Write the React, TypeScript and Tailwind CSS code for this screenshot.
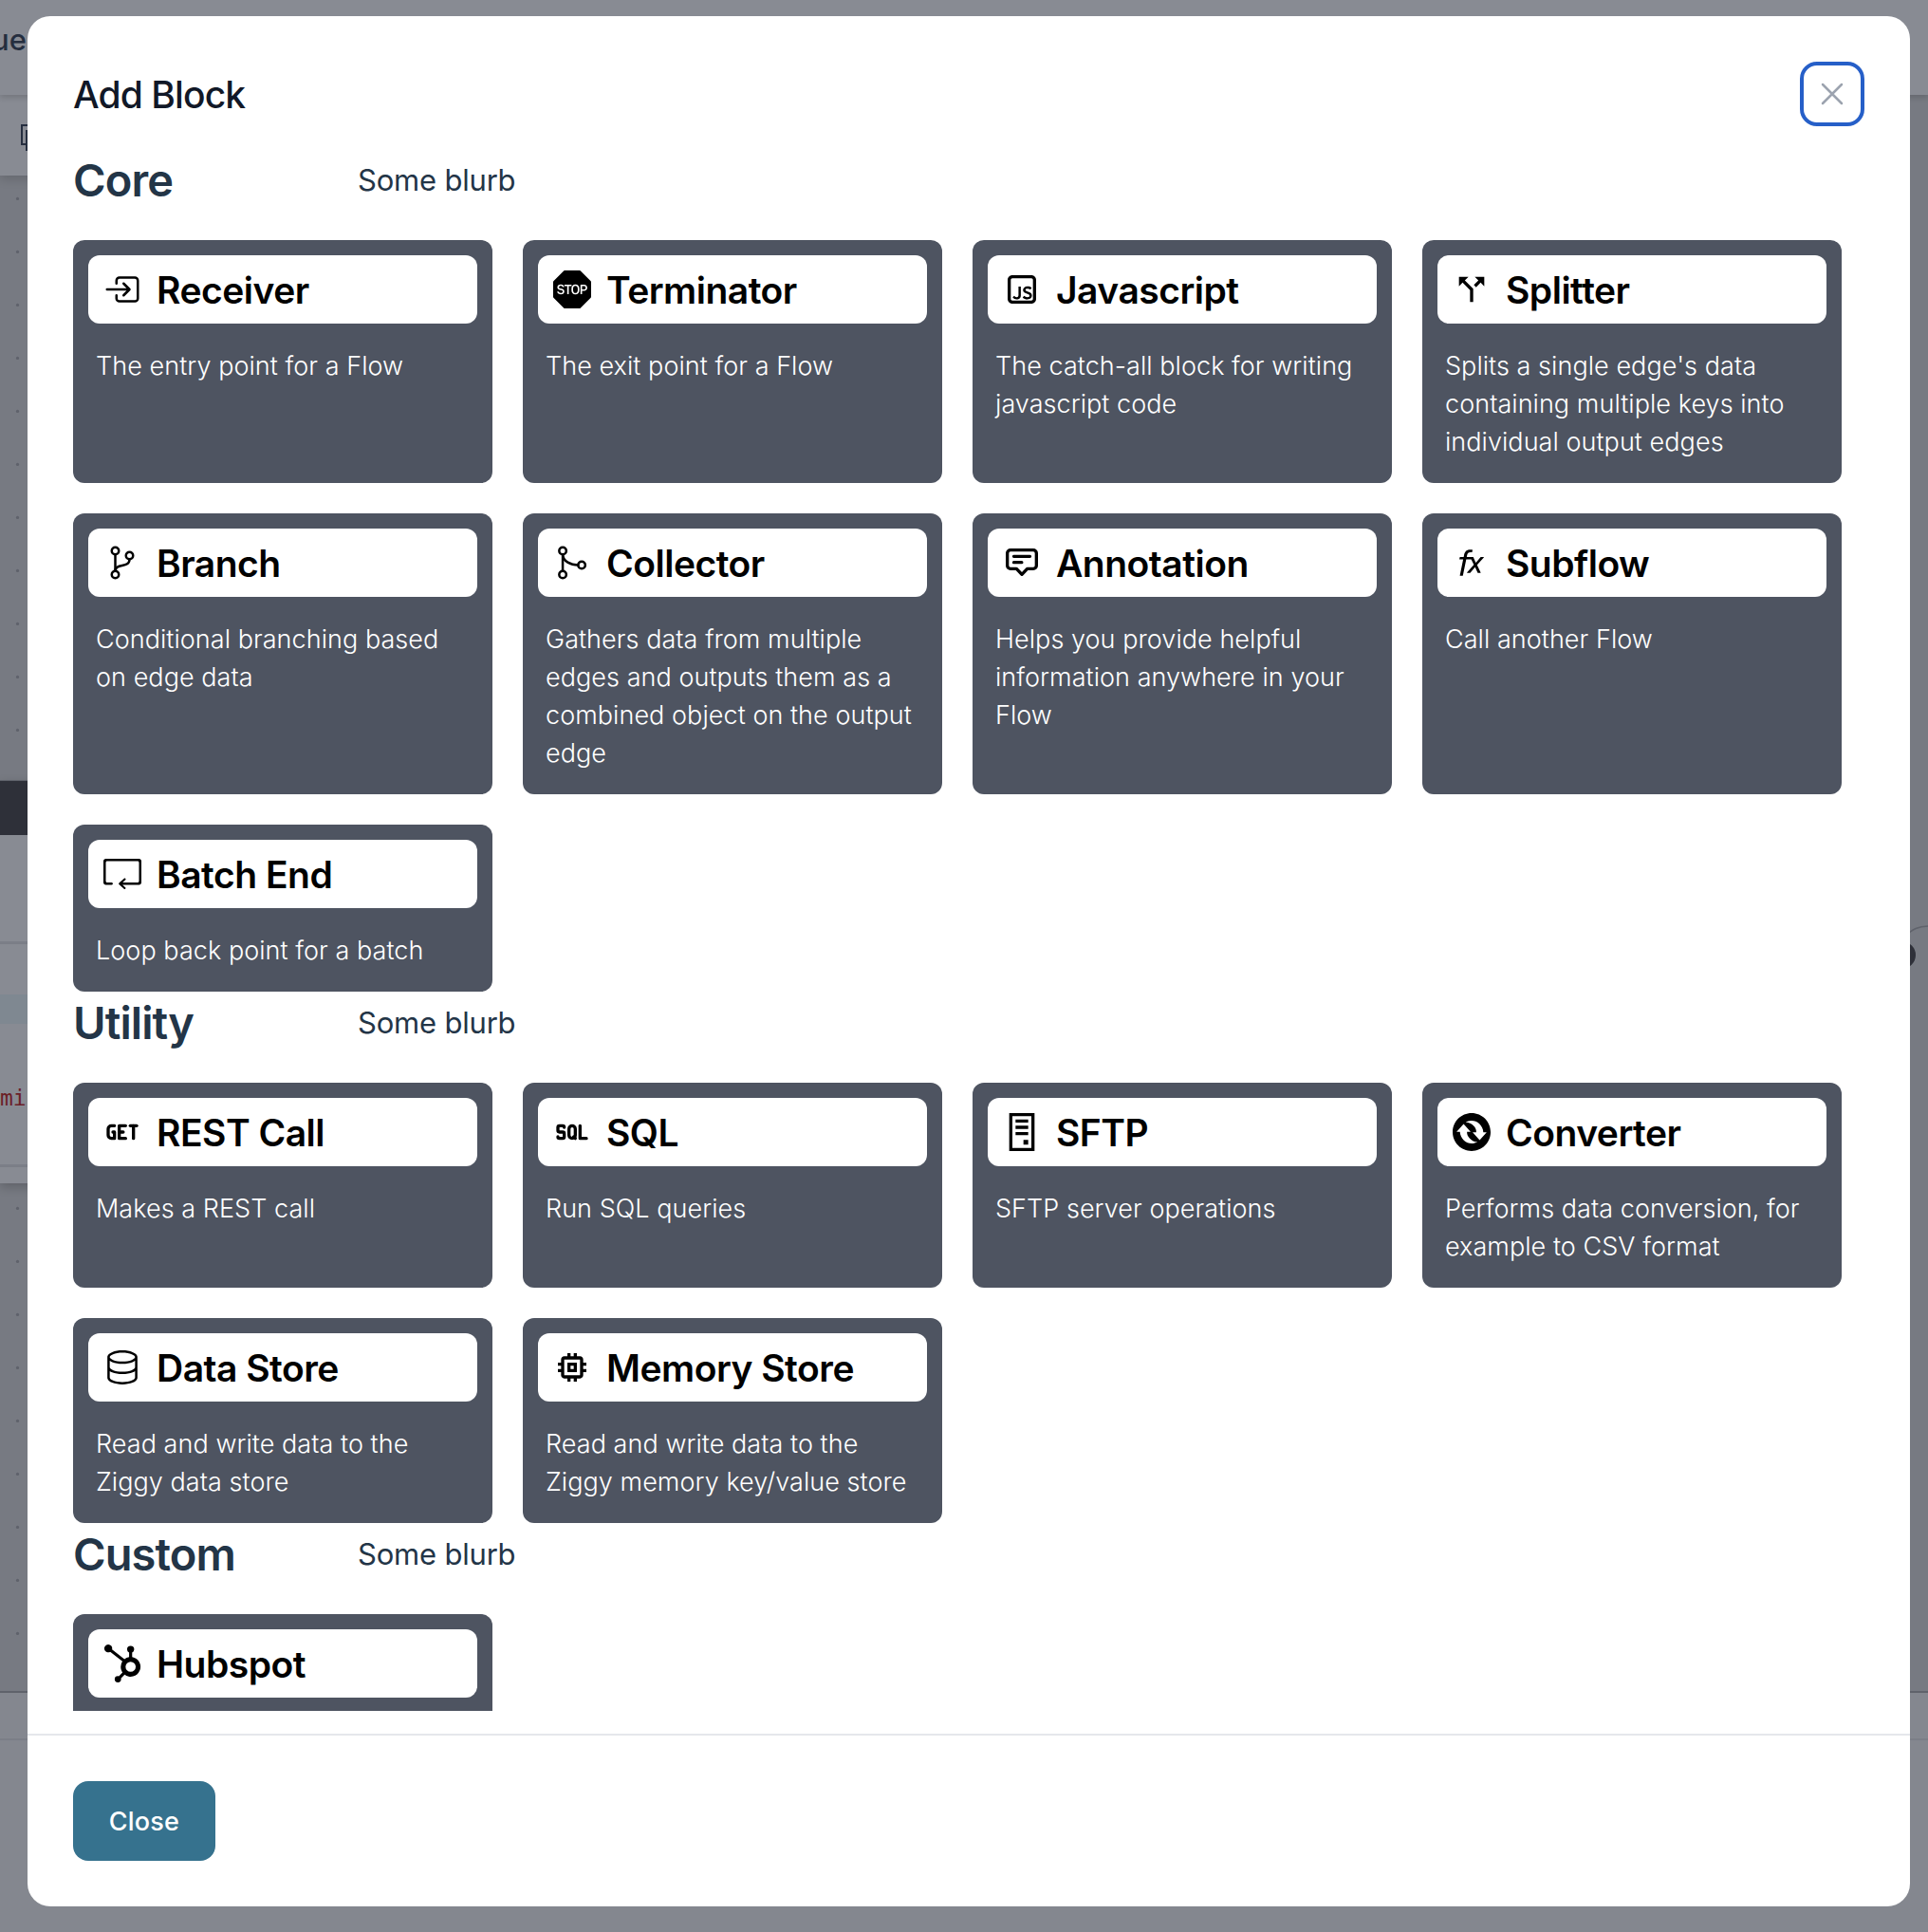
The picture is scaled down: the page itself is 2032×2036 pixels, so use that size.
import type { ComponentType } from "react";
import { AiOutlineFunction } from "react-icons/ai";
import { BsSignStopFill } from "react-icons/bs";
import { GoDatabase } from "react-icons/go";
import { GrServer } from "react-icons/gr";
import { IoEnterOutline, IoGitBranchOutline, IoGitMergeOutline } from "react-icons/io5";
import { MdCallSplit, MdMemory } from "react-icons/md";
import { RiJavascriptLine } from "react-icons/ri";
import { SiConvertio, SiHubspot } from "react-icons/si";
import { SlLoop } from "react-icons/sl";
import { TbHttpGet, TbSql } from "react-icons/tb";

type IconProps = { size?: number; className?: string };
type Icon = ComponentType<IconProps>;
type Block = { name: string; description: string; icon: Icon };
type Section = { title: string; blurb: string; blocks: Block[] };

function AnnotationIcon({ size = 24, className }: IconProps) {
  return (
    <svg
      width={size}
      height={size}
      viewBox="0 0 24 24"
      fill="none"
      stroke="currentColor"
      strokeWidth="2"
      strokeLinecap="round"
      strokeLinejoin="round"
      className={className}
    >
      <path d="M4.8 4h14.4a2 2 0 0 1 2 2v7.8a2 2 0 0 1-2 2H15.4L12 19.4 8.6 15.8H4.8a2 2 0 0 1-2-2V6a2 2 0 0 1 2-2Z" />
      <path d="M6.9 8h10.2M6.9 11.8h5" />
    </svg>
  );
}

const sections: Section[] = [
  {
    title: "Core",
    blurb: "Some blurb",
    blocks: [
      { name: "Receiver", description: "The entry point for a Flow", icon: IoEnterOutline },
      { name: "Terminator", description: "The exit point for a Flow", icon: BsSignStopFill },
      { name: "Javascript", description: "The catch-all block for writing javascript code", icon: RiJavascriptLine },
      {
        name: "Splitter",
        description: "Splits a single edge's data containing multiple keys into individual output edges",
        icon: MdCallSplit,
      },
      { name: "Branch", description: "Conditional branching based on edge data", icon: IoGitBranchOutline },
      {
        name: "Collector",
        description: "Gathers data from multiple edges and outputs them as a combined object on the output edge",
        icon: IoGitMergeOutline,
      },
      {
        name: "Annotation",
        description: "Helps you provide helpful information anywhere in your Flow",
        icon: AnnotationIcon,
      },
      { name: "Subflow", description: "Call another Flow", icon: AiOutlineFunction },
      { name: "Batch End", description: "Loop back point for a batch", icon: SlLoop },
    ],
  },
  {
    title: "Utility",
    blurb: "Some blurb",
    blocks: [
      { name: "REST Call", description: "Makes a REST call", icon: TbHttpGet },
      { name: "SQL", description: "Run SQL queries", icon: TbSql },
      { name: "SFTP", description: "SFTP server operations", icon: GrServer },
      { name: "Converter", description: "Performs data conversion, for example to CSV format", icon: SiConvertio },
      { name: "Data Store", description: "Read and write data to the Ziggy data store", icon: GoDatabase },
      {
        name: "Memory Store",
        description: "Read and write data to the Ziggy memory key/value store",
        icon: MdMemory,
      },
    ],
  },
  {
    title: "Custom",
    blurb: "Some blurb",
    blocks: [{ name: "Hubspot", description: "", icon: SiHubspot }],
  },
];

function BlockCard({ name, description, icon: BlockIcon }: Block) {
  return (
    <div className="min-h-44 rounded-xl bg-[#4e5461] p-4">
      <div className="flex h-[72px] items-center gap-4 rounded-xl bg-white px-4 text-black">
        <BlockIcon size={40} className="shrink-0" />
        <span className="pt-0.5 text-[39px] leading-10 font-semibold tracking-[-0.5px] whitespace-nowrap">{name}</span>
      </div>
      {description && (
        <p className="px-2 pt-[25px] pb-[7px] text-[27px] leading-10 font-light tracking-[0.05px] text-white">
          {description}
        </p>
      )}
    </div>
  );
}

function BlockSection({ title, blurb, blocks }: Section) {
  return (
    <section>
      <div className="mb-8 flex h-16 items-center text-[#233547]">
        <h2 className="w-[300px] text-[47px] leading-none font-semibold tracking-[-0.9px]">{title}</h2>
        <p className="text-[31px] leading-none tracking-[-0.2px]">{blurb}</p>
      </div>
      <div className="grid grid-cols-4 gap-8">
        {blocks.map((block) => (
          <BlockCard key={block.name} {...block} />
        ))}
      </div>
    </section>
  );
}

const gridDots = Array.from({ length: 28 }, (_, i) => 209.4 + i * 56);

/* The dimmed flow editor that stays visible around the dialog. */
function EditorBackdrop() {
  return (
    <div className="flex h-full flex-col bg-[#777a82] text-[#252e3f]">
      <div className="z-20 flex h-[100px] shrink-0 bg-[#888b93] shadow-[0_3px_6px_rgba(0,0,0,0.15)]">
        <span className="-ml-[9px] pt-[22px] text-[31px] leading-10 font-medium">ues</span>
      </div>
      <div className="z-10 flex h-[85px] w-[60px] shrink-0 bg-[#888b93] pt-[30px] pl-[20px] shadow-[0_4px_10px_rgba(0,0,0,0.15)]">
        <svg width="30" height="30" viewBox="0 0 30 30" fill="none" stroke="currentColor" strokeWidth="2">
          <path d="M7 22H3V2h18v5" />
          <rect x="8" y="8" width="20" height="20" />
        </svg>
      </div>
      <div className="relative flex-1">
        <svg className="absolute -top-[185px] left-0" width="2032" height="1783" viewBox="0 0 2032 1783" fill="none">
          {gridDots.map((y) => (
            <circle key={y} cx="18.5" cy={y} r="1.6" fill="#5f626b" />
          ))}
          <path d="M2008 987C2015 979 2022 976 2034 976" stroke="#5f626b" strokeWidth="1.5" />
          <circle cx="2005" cy="1006.5" r="14" fill="#2e3039" />
        </svg>
        <div className="absolute top-[637px] left-0 flex h-[425px] w-[60px] flex-col bg-[#888b93] shadow-[0_4px_10px_rgba(0,0,0,0.2)]">
          <div className="h-[58px] border-t border-[#5f626b] bg-[#2e3039]" />
          <div className="h-[112px]" />
          <div className="h-[3px] bg-[#7b7e87]" />
          <div className="h-[53px]" />
          <div className="h-[31px] bg-[#7f8891]" />
          <div className="h-[148px] pt-[60px] font-['DejaVu_Sans_Mono'] text-[23px] leading-[36px] text-[#6b1f28]">mi</div>
          <div className="h-[3px] bg-[#7b7e87]" />
        </div>
      </div>
      <div className="h-[50px] shrink-0 border-t-2 border-[#5f626b] bg-[#84878f]" />
      <div className="h-[204px] shrink-0 border-t-2 border-[#7b7e87] bg-[#84878f]" />
    </div>
  );
}

export default function App() {
  return (
    <div className="relative h-[2036px] w-[2032px] overflow-hidden font-['Inter',sans-serif]">
      <EditorBackdrop />
      <div
        role="dialog"
        className="absolute top-[17px] left-[29px] z-30 flex h-[1992px] w-[1984px] flex-col overflow-hidden rounded-3xl bg-white"
      >
        <header className="flex h-[140px] shrink-0 items-center justify-between px-12 pt-6">
          <h1 className="pt-0.5 text-[39px] leading-10 font-medium tracking-[-0.9px] text-[#111827]">Add Block</h1>
          <button
            type="button"
            aria-label="Close dialog"
            className="flex size-[68px] items-center justify-center rounded-[18px] border-4 border-[#265fc8] text-[#9ca3af]"
          >
            <svg width="40" height="40" viewBox="0 0 24 24" fill="none" stroke="currentColor" strokeWidth="1.5">
              <path strokeLinecap="round" strokeLinejoin="round" d="M6 18 18 6M6 6l12 12" />
            </svg>
          </button>
        </header>
        <div className="h-[1646px] shrink-0 overflow-hidden pr-[72px] pl-12">
          {sections.map((section) => (
            <BlockSection key={section.title} {...section} />
          ))}
        </div>
        <footer className="mt-6 flex-1 border-t-2 border-[#e5e7eb] px-12 pt-12">
          <button
            type="button"
            className="h-[84px] w-[150px] rounded-2xl bg-[#36728e] pt-0.5 text-[27px] font-medium tracking-[0.2px] text-white"
          >
            Close
          </button>
        </footer>
      </div>
    </div>
  );
}
